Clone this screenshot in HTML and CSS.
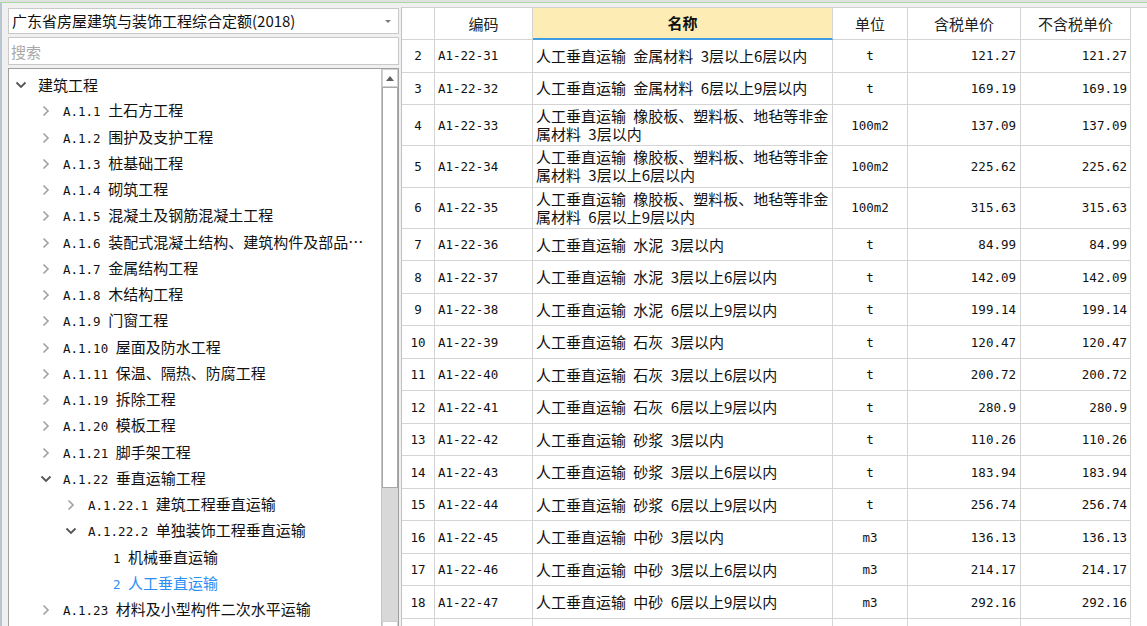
FILE: index.html
```html
<!DOCTYPE html>
<html lang="zh-CN">
<head>
<meta charset="utf-8">
<title>定额</title>
<link rel="stylesheet" href="styles.css">
</head>
<body>
<div class="topbar"></div>
<div class="main">
  <aside class="side">
    <div class="select"><span class="select-text">广东省房屋建筑与装饰工程综合定额(2018)</span><span class="caret"></span></div>
    <div class="search"><span class="ph">搜索</span></div>
    <div class="tree">
      <ul class="tree-list">
        <li class="node lv0"><span class="tw"><svg class="chev-d" viewBox="0 0 12 8"><polyline points="1.5,1.5 6,6 10.5,1.5"/></svg></span><span class="label">建筑工程</span></li>
        <li class="node lv1"><span class="tw"><svg class="chev-r" viewBox="0 0 8 12"><polyline points="1.5,1.5 6,6 1.5,10.5"/></svg></span><span class="label"><span class="code">A.1.1 </span>土石方工程</span></li>
        <li class="node lv1"><span class="tw"><svg class="chev-r" viewBox="0 0 8 12"><polyline points="1.5,1.5 6,6 1.5,10.5"/></svg></span><span class="label"><span class="code">A.1.2 </span>围护及支护工程</span></li>
        <li class="node lv1"><span class="tw"><svg class="chev-r" viewBox="0 0 8 12"><polyline points="1.5,1.5 6,6 1.5,10.5"/></svg></span><span class="label"><span class="code">A.1.3 </span>桩基础工程</span></li>
        <li class="node lv1"><span class="tw"><svg class="chev-r" viewBox="0 0 8 12"><polyline points="1.5,1.5 6,6 1.5,10.5"/></svg></span><span class="label"><span class="code">A.1.4 </span>砌筑工程</span></li>
        <li class="node lv1"><span class="tw"><svg class="chev-r" viewBox="0 0 8 12"><polyline points="1.5,1.5 6,6 1.5,10.5"/></svg></span><span class="label"><span class="code">A.1.5 </span>混凝土及钢筋混凝土工程</span></li>
        <li class="node lv1"><span class="tw"><svg class="chev-r" viewBox="0 0 8 12"><polyline points="1.5,1.5 6,6 1.5,10.5"/></svg></span><span class="label"><span class="code">A.1.6 </span>装配式混凝土结构、建筑构件及部品工程</span></li>
        <li class="node lv1"><span class="tw"><svg class="chev-r" viewBox="0 0 8 12"><polyline points="1.5,1.5 6,6 1.5,10.5"/></svg></span><span class="label"><span class="code">A.1.7 </span>金属结构工程</span></li>
        <li class="node lv1"><span class="tw"><svg class="chev-r" viewBox="0 0 8 12"><polyline points="1.5,1.5 6,6 1.5,10.5"/></svg></span><span class="label"><span class="code">A.1.8 </span>木结构工程</span></li>
        <li class="node lv1"><span class="tw"><svg class="chev-r" viewBox="0 0 8 12"><polyline points="1.5,1.5 6,6 1.5,10.5"/></svg></span><span class="label"><span class="code">A.1.9 </span>门窗工程</span></li>
        <li class="node lv1"><span class="tw"><svg class="chev-r" viewBox="0 0 8 12"><polyline points="1.5,1.5 6,6 1.5,10.5"/></svg></span><span class="label"><span class="code">A.1.10 </span>屋面及防水工程</span></li>
        <li class="node lv1"><span class="tw"><svg class="chev-r" viewBox="0 0 8 12"><polyline points="1.5,1.5 6,6 1.5,10.5"/></svg></span><span class="label"><span class="code">A.1.11 </span>保温、隔热、防腐工程</span></li>
        <li class="node lv1"><span class="tw"><svg class="chev-r" viewBox="0 0 8 12"><polyline points="1.5,1.5 6,6 1.5,10.5"/></svg></span><span class="label"><span class="code">A.1.19 </span>拆除工程</span></li>
        <li class="node lv1"><span class="tw"><svg class="chev-r" viewBox="0 0 8 12"><polyline points="1.5,1.5 6,6 1.5,10.5"/></svg></span><span class="label"><span class="code">A.1.20 </span>模板工程</span></li>
        <li class="node lv1"><span class="tw"><svg class="chev-r" viewBox="0 0 8 12"><polyline points="1.5,1.5 6,6 1.5,10.5"/></svg></span><span class="label"><span class="code">A.1.21 </span>脚手架工程</span></li>
        <li class="node lv1"><span class="tw"><svg class="chev-d" viewBox="0 0 12 8"><polyline points="1.5,1.5 6,6 10.5,1.5"/></svg></span><span class="label"><span class="code">A.1.22 </span>垂直运输工程</span></li>
        <li class="node lv2"><span class="tw"><svg class="chev-r" viewBox="0 0 8 12"><polyline points="1.5,1.5 6,6 1.5,10.5"/></svg></span><span class="label"><span class="code">A.1.22.1 </span>建筑工程垂直运输</span></li>
        <li class="node lv2"><span class="tw"><svg class="chev-d" viewBox="0 0 12 8"><polyline points="1.5,1.5 6,6 10.5,1.5"/></svg></span><span class="label"><span class="code">A.1.22.2 </span>单独装饰工程垂直运输</span></li>
        <li class="node lv3"><span class="tw"></span><span class="label"><span class="code">1 </span>机械垂直运输</span></li>
        <li class="node lv3 sel"><span class="tw"></span><span class="label"><span class="code">2 </span>人工垂直运输</span></li>
        <li class="node lv1"><span class="tw"><svg class="chev-r" viewBox="0 0 8 12"><polyline points="1.5,1.5 6,6 1.5,10.5"/></svg></span><span class="label"><span class="code">A.1.23 </span>材料及小型构件二次水平运输</span></li>
      </ul>
      <div class="vscroll">
        <div class="sb-btn"><span class="arrow-up"></span></div>
        <div class="sb-thumb"></div>
        <div class="sb-track"></div>
        <div class="sb-btn"><span class="arrow-down"></span></div>
      </div>
    </div>
  </aside>

  <section class="grid">
    <div class="row head">
      <div class="cell"></div>
      <div class="cell c-center">编码</div>
      <div class="cell c-center active">名称</div>
      <div class="cell c-center">单位</div>
      <div class="cell c-center">含税单价</div>
      <div class="cell c-center">不含税单价</div>
    </div>

    <div class="row r"><div class="cell num">2</div><div class="cell code-c">A1-22-31</div><div class="cell name">人工垂直运输 金属材料 3层以上6层以内</div><div class="cell unit">t</div><div class="cell price">121.27</div><div class="cell price last">121.27</div></div>
    <div class="row r"><div class="cell num">3</div><div class="cell code-c">A1-22-32</div><div class="cell name">人工垂直运输 金属材料 6层以上9层以内</div><div class="cell unit">t</div><div class="cell price">169.19</div><div class="cell price last">169.19</div></div>
    <div class="row r tall"><div class="cell num">4</div><div class="cell code-c">A1-22-33</div><div class="cell name">人工垂直运输 橡胶板、塑料板、地毡等非金属材料 3层以内</div><div class="cell unit">100m2</div><div class="cell price">137.09</div><div class="cell price last">137.09</div></div>
    <div class="row r tall"><div class="cell num">5</div><div class="cell code-c">A1-22-34</div><div class="cell name">人工垂直运输 橡胶板、塑料板、地毡等非金属材料 3层以上6层以内</div><div class="cell unit">100m2</div><div class="cell price">225.62</div><div class="cell price last">225.62</div></div>
    <div class="row r tall"><div class="cell num">6</div><div class="cell code-c">A1-22-35</div><div class="cell name">人工垂直运输 橡胶板、塑料板、地毡等非金属材料 6层以上9层以内</div><div class="cell unit">100m2</div><div class="cell price">315.63</div><div class="cell price last">315.63</div></div>
    <div class="row r"><div class="cell num">7</div><div class="cell code-c">A1-22-36</div><div class="cell name">人工垂直运输 水泥 3层以内</div><div class="cell unit">t</div><div class="cell price">84.99</div><div class="cell price last">84.99</div></div>
    <div class="row r"><div class="cell num">8</div><div class="cell code-c">A1-22-37</div><div class="cell name">人工垂直运输 水泥 3层以上6层以内</div><div class="cell unit">t</div><div class="cell price">142.09</div><div class="cell price last">142.09</div></div>
    <div class="row r"><div class="cell num">9</div><div class="cell code-c">A1-22-38</div><div class="cell name">人工垂直运输 水泥 6层以上9层以内</div><div class="cell unit">t</div><div class="cell price">199.14</div><div class="cell price last">199.14</div></div>
    <div class="row r"><div class="cell num">10</div><div class="cell code-c">A1-22-39</div><div class="cell name">人工垂直运输 石灰 3层以内</div><div class="cell unit">t</div><div class="cell price">120.47</div><div class="cell price last">120.47</div></div>
    <div class="row r"><div class="cell num">11</div><div class="cell code-c">A1-22-40</div><div class="cell name">人工垂直运输 石灰 3层以上6层以内</div><div class="cell unit">t</div><div class="cell price">200.72</div><div class="cell price last">200.72</div></div>
    <div class="row r"><div class="cell num">12</div><div class="cell code-c">A1-22-41</div><div class="cell name">人工垂直运输 石灰 6层以上9层以内</div><div class="cell unit">t</div><div class="cell price">280.9</div><div class="cell price last">280.9</div></div>
    <div class="row r"><div class="cell num">13</div><div class="cell code-c">A1-22-42</div><div class="cell name">人工垂直运输 砂浆 3层以内</div><div class="cell unit">t</div><div class="cell price">110.26</div><div class="cell price last">110.26</div></div>
    <div class="row r"><div class="cell num">14</div><div class="cell code-c">A1-22-43</div><div class="cell name">人工垂直运输 砂浆 3层以上6层以内</div><div class="cell unit">t</div><div class="cell price">183.94</div><div class="cell price last">183.94</div></div>
    <div class="row r"><div class="cell num">15</div><div class="cell code-c">A1-22-44</div><div class="cell name">人工垂直运输 砂浆 6层以上9层以内</div><div class="cell unit">t</div><div class="cell price">256.74</div><div class="cell price last">256.74</div></div>
    <div class="row r"><div class="cell num">16</div><div class="cell code-c">A1-22-45</div><div class="cell name">人工垂直运输 中砂 3层以内</div><div class="cell unit">m3</div><div class="cell price">136.13</div><div class="cell price last">136.13</div></div>
    <div class="row r"><div class="cell num">17</div><div class="cell code-c">A1-22-46</div><div class="cell name">人工垂直运输 中砂 3层以上6层以内</div><div class="cell unit">m3</div><div class="cell price">214.17</div><div class="cell price last">214.17</div></div>
    <div class="row r"><div class="cell num">18</div><div class="cell code-c">A1-22-47</div><div class="cell name">人工垂直运输 中砂 6层以上9层以内</div><div class="cell unit">m3</div><div class="cell price">292.16</div><div class="cell price last">292.16</div></div>
    <div class="row r"><div class="cell num"></div><div class="cell code-c"></div><div class="cell name"></div><div class="cell unit"></div><div class="cell price"></div><div class="cell price last"></div></div>
  </section>
</div>
</body>
</html>
```

FILE: styles.css
```css
* {
  box-sizing: border-box;
  margin: 0;
  padding: 0;
}

html,
body {
  width: 1147px;
  height: 626px;
  overflow: hidden;
}

body {
  background: #f0f0f0;
  font-family: "Noto Sans CJK SC", sans-serif;
  font-size: 15px;
  color: #111;
}

.topbar {
  height: 3px;
  background: #e1e1e1;
  border-bottom: 1px solid #a8d9a0;
}

.main {
  display: flex;
  height: 623px;
}

/* ---------- left side ---------- */
.side {
  width: 401px;
  flex: none;
  border-left: 2px solid #b8c6d2;
  padding: 5px 0 0 6px;
}

.select {
  width: 391px;
  height: 26px;
  background: #fff;
  border: 1px solid #c9c9c9;
  display: flex;
  align-items: center;
  padding-left: 3px;
}

.select-text {
  flex: 1;
  line-height: 22px;
  white-space: nowrap;
}

.caret {
  width: 0;
  height: 0;
  border-left: 3px solid transparent;
  border-right: 3px solid transparent;
  border-top: 3px solid #7a7a7a;
  margin-right: 7px;
}

.search {
  margin-top: 3px;
  width: 391px;
  height: 28px;
  background: #fff;
  border: 1px solid #c9c9c9;
  display: flex;
  align-items: center;
  padding-left: 2px;
  color: #a9a9a9;
}

.tree {
  margin-top: 3px;
  width: 391px;
  height: 572px;
  background: #fff;
  border: 1px solid #a0a0a0;
  display: flex;
}

.tree-list {
  flex: 1;
  min-width: 0;
  list-style: none;
  padding-top: 3px;
}

.node {
  height: 26.25px;
  display: flex;
  align-items: center;
  padding-right: 15px;
  color: #111;
}

.lv1 { padding-left: 25px; }
.lv2 { padding-left: 50px; }
.lv3 { padding-left: 75px; }

.tw {
  width: 24px;
  height: 20px;
  flex: none;
  display: flex;
  justify-content: center;
  align-items: center;
  margin-right: 5px;
}

.chev-r {
  width: 8px;
  height: 12px;
  fill: none;
  stroke: #a3a3a3;
  stroke-width: 1.7;
}

.chev-d {
  width: 12px;
  height: 8px;
  fill: none;
  stroke: #555;
  stroke-width: 1.8;
}

.label {
  flex: 1;
  min-width: 0;
  white-space: nowrap;
  overflow: hidden;
  text-overflow: ellipsis;
  line-height: 22px;
}

.code {
  font-family: "DejaVu Sans Mono", "Liberation Mono", monospace;
  font-size: 12.5px;
}

.sel {
  color: #2a8ff2;
}

.vscroll {
  width: 17px;
  flex: none;
  display: flex;
  flex-direction: column;
  background: #d8d8d8;
  border-left: 1px solid #c4c4c4;
}

.sb-btn {
  height: 18px;
  flex: none;
  background: #fff;
  border: 1px solid #d0d0d0;
  display: flex;
  align-items: center;
  justify-content: center;
}

.arrow-up {
  width: 0;
  height: 0;
  border-left: 4.5px solid transparent;
  border-right: 4.5px solid transparent;
  border-bottom: 5px solid #5e5e5e;
}

.arrow-down {
  width: 0;
  height: 0;
  border-left: 4.5px solid transparent;
  border-right: 4.5px solid transparent;
  border-top: 5px solid #5e5e5e;
}

.sb-thumb {
  height: 401px;
  flex: none;
  background: #fff;
  border: 1px solid #a9a9a9;
}

.sb-track {
  flex: 1;
}

/* ---------- grid ---------- */
.grid {
  flex: 1;
  margin-top: 4px;
  background: #fff;
  border-top: 1px solid #d0d0d0;
  border-left: 1px solid #c2c2c2;
  overflow: hidden;
}

.row {
  display: grid;
  grid-template-columns: 33px 98px 300px 75px 113px 110px;
  width: 729px;
}

.head {
  height: 32px;
}

.r {
  height: 32.5px;
}

.r.tall {
  height: 41.25px;
}

.cell {
  border-right: 1px solid #d4d4d4;
  border-bottom: 1px solid #d4d4d4;
  display: flex;
  align-items: center;
  overflow: hidden;
  color: #111;
}

.c-center {
  justify-content: center;
  line-height: 20px;
  color: #222;
}

.head .active {
  background: #fdecb3;
  border-bottom: 2px solid #3d9ce2;
  font-weight: bold;
  color: #111;
}

.num,
.code-c,
.unit,
.price {
  font-family: "DejaVu Sans Mono", "Liberation Mono", monospace;
  font-size: 12.5px;
}

.num {
  justify-content: center;
}

.code-c {
  padding-left: 3px;
}

.name {
  padding: 0 1px 0 3px;
  line-height: 18px;
  word-spacing: 4px;
}

.unit {
  justify-content: center;
}

.price {
  justify-content: flex-end;
  padding-right: 4px;
}

.price.last {
  padding-right: 3px;
}
```
